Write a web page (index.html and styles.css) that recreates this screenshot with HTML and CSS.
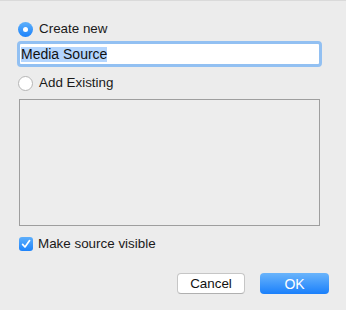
FILE: index.html
```html
<!DOCTYPE html>
<html>
<head>
<meta charset="utf-8">
<link rel="stylesheet" href="styles.css">
</head>
<body>
<div class="dialog">
  <div class="opt opt-create">
    <span class="radio on"><span class="dot"></span></span>
    <span class="label">Create new</span>
  </div>
  <div class="field"><span class="sel">Media Source</span></div>
  <div class="opt opt-add">
    <span class="radio"></span>
    <span class="label">Add Existing</span>
  </div>
  <div class="list"></div>
  <div class="check-row">
    <span class="check">
      <svg width="14" height="14" viewBox="0 0 14 14"><path d="M3.6 7.4 L6 10 L10.6 3.6" fill="none" stroke="#fff" stroke-width="1.7" stroke-linecap="round" stroke-linejoin="round"/></svg>
    </span>
    <span class="label">Make source visible</span>
  </div>
  <div class="buttons">
    <div class="btn cancel">Cancel</div>
    <div class="btn ok">OK</div>
  </div>
</div>
</body>
</html>
```
FILE: styles.css
```css
html, body {
  margin: 0;
  padding: 0;
  background: #ececec;
}
body {
  width: 346px;
  height: 310px;
  overflow: hidden;
  font-family: "Liberation Sans", Arial, sans-serif;
  font-size: 13.4px;
  color: #1a1a1a;
  border-top: 1px solid #dadada;
  box-sizing: border-box;
}
.dialog {
  display: flex;
  flex-direction: column;
  padding: 0 17px 0 17px;
}
.opt {
  display: flex;
  align-items: center;
  height: 16px;
  padding-left: 1px;
}
.opt-create { margin-top: 20px; }
.opt-add { margin-top: 8px; }
.label {
  margin-left: 6px;
  line-height: 16px;
}
.radio {
  width: 15px;
  height: 15px;
  box-sizing: border-box;
  border-radius: 50%;
  border: 1px solid #b5b5b5;
  background: #fff;
  display: flex;
  align-items: center;
  justify-content: center;
  flex: none;
}
.radio.on {
  border: none;
  background: linear-gradient(#5eb0fb, #1b82fb);
}
.radio .dot {
  width: 5px;
  height: 5px;
  border-radius: 50%;
  background: #fff;
}
.field {
  margin: 4px 7px 0 0;
  height: 20px;
  border: 3px solid #92c0f2;
  border-radius: 4px;
  background: #fff;
  display: flex;
  align-items: center;
  padding-left: 1px;
  font-size: 14px;
}
.sel {
  background: #b4d5fd;
  color: #111;
  line-height: 15px;
}
.list {
  margin: 8px 9px 0 2px;
  height: 125px;
  border: 1px solid #9e9e9e;
  background: #ededed;
}
.check-row {
  display: flex;
  align-items: center;
  margin-top: 11px;
  padding-left: 2px;
  height: 14px;
}
.check {
  width: 14px;
  height: 14px;
  border-radius: 3px;
  background: linear-gradient(#5eaffb, #1d83fb);
  display: flex;
  flex: none;
}
.check + .label { margin-left: 5px; }
.buttons {
  display: flex;
  justify-content: flex-end;
  gap: 15px;
  margin-top: 22px;
  padding-right: 0;
}
.btn {
  height: 21px;
  box-sizing: border-box;
  border-radius: 4px;
  display: flex;
  align-items: center;
  justify-content: center;
  font-size: 13.4px;
}
.cancel {
  width: 68px;
  background: #fff;
  border: 1px solid #c6c6c6;
  border-bottom-color: #b0b0b0;
  color: #111;
}
.ok {
  width: 69px;
  background: linear-gradient(#6ab4fb, #1a80fb);
  color: #fff;
  font-size: 14px;
}
```
